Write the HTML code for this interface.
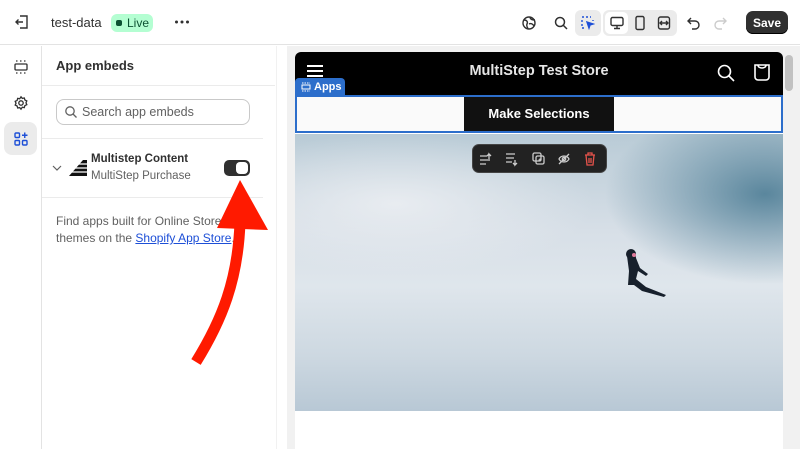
<!DOCTYPE html>
<html><head><style>
*{box-sizing:border-box;margin:0;padding:0}
body{width:800px;height:449px;overflow:hidden;background:#fff;font-family:"Liberation Sans",sans-serif;position:relative;color:#303030}
.a{position:absolute}
</style></head><body>
<!-- top bar -->
<div class="a" style="left:0;top:0;width:800px;height:45px;background:#fff;border-bottom:1px solid #e3e3e3"></div>
<svg class="a" style="left:14px;top:14px" width="16" height="16" viewBox="0 0 16 16" fill="none" stroke="#303030" stroke-width="1.4"><path d="M6 2h7v12H6M9 8H2M4.5 5.5L2 8l2.5 2.5"/></svg>
<div class="a" style="left:51px;top:15px;font-size:13px">test-data</div>
<div class="a" style="left:111px;top:14px;width:42px;height:18px;border-radius:6px;background:#b4fed2;font-size:12px;color:#0c5132;padding:2px 0 0 16px">Live</div>
<div class="a" style="left:116px;top:20px;width:6px;height:6px;border-radius:2px;background:#0c5132"></div>
<svg class="a" style="left:174px;top:20px" width="16" height="4" viewBox="0 0 16 4" fill="#303030"><circle cx="2.5" cy="2" r="1.5"/><circle cx="8" cy="2" r="1.5"/><circle cx="13.5" cy="2" r="1.5"/></svg>
<svg class="a" style="left:521px;top:15px" width="16" height="16" viewBox="0 0 16 16" fill="none" stroke="#303030" stroke-width="1.4"><circle cx="8" cy="8" r="6"/><path d="M3 5c3 0 4 2 3 4s1 4 1 5M9 2c0 2 2 3 5 3M8 9c2-1 4 0 5 2"/></svg>
<svg class="a" style="left:553px;top:15px" width="16" height="16" viewBox="0 0 16 16" fill="none" stroke="#303030" stroke-width="1.5"><circle cx="7" cy="7" r="4.5"/><path d="M10.5 10.5L14 14"/></svg>
<div class="a" style="left:575px;top:10px;width:26px;height:26px;border-radius:6px;background:#ebebeb"></div>
<svg class="a" style="left:581px;top:16px" width="14" height="14" viewBox="0 0 14 14" fill="none" stroke="#1d4fd7" stroke-width="1.4"><path d="M1 1h2M5 1h2M9 1h1M1 4v2M1 8v2M1 12h2M12 4v1" /><path d="M6 6l6 2-3 1-1 3z" fill="#1d4fd7"/></svg>
<div class="a" style="left:603px;top:10px;width:74px;height:26px;border-radius:6px;background:#ebebeb"></div>
<div class="a" style="left:605px;top:12px;width:23px;height:22px;border-radius:5px;background:#fff"></div>
<svg class="a" style="left:609px;top:15px" width="16" height="16" viewBox="0 0 16 16" fill="none" stroke="#303030" stroke-width="1.4"><rect x="2" y="2.5" width="12" height="8" rx="1.5"/><path d="M8 10.5v3M5 13.5h6"/></svg>
<svg class="a" style="left:632px;top:15px" width="16" height="16" viewBox="0 0 16 16" fill="none" stroke="#303030" stroke-width="1.4"><rect x="4" y="1.5" width="8" height="13" rx="1.5"/></svg>
<svg class="a" style="left:656px;top:15px" width="16" height="16" viewBox="0 0 16 16" fill="none" stroke="#303030" stroke-width="1.4"><rect x="2.5" y="2" width="11" height="12" rx="2"/><path d="M4 8h8M6 6l-2 2 2 2M10 6l2 2-2 2"/></svg>
<svg class="a" style="left:686px;top:15px" width="16" height="16" viewBox="0 0 16 16" fill="none" stroke="#303030" stroke-width="1.4"><path d="M5 3L2 6l3 3M2 6h7a4 4 0 010 8H6"/></svg>
<svg class="a" style="left:712px;top:15px" width="16" height="16" viewBox="0 0 16 16" fill="none" stroke="#ccc" stroke-width="1.4"><path d="M11 3l3 3-3 3M14 6H7a4 4 0 000 8h3"/></svg>
<div class="a" style="left:746px;top:11px;width:42px;height:23px;border-radius:7px;background:#303030;color:#fff;font-size:12px;font-weight:bold;text-align:center;line-height:23px;padding:0;box-shadow:inset 0 -1px 0 #000"><span style="display:inline-block;line-height:14px;vertical-align:middle">Save</span></div>

<!-- left rail -->
<div class="a" style="left:0;top:46px;width:42px;height:403px;border-right:1px solid #e3e3e3"></div>
<svg class="a" style="left:13px;top:59px" width="16" height="16" viewBox="0 0 16 16" fill="none" stroke="#303030" stroke-width="1.3"><rect x="2" y="5" width="12" height="6" rx="1"/><path d="M3 2h2M7 2h2M11 2h2M3 14h2M7 14h2M11 14h2" stroke-dasharray="1.5 1"/></svg>
<svg class="a" style="left:13px;top:95px" width="16" height="16" viewBox="0 0 16 16" fill="none" stroke="#303030" stroke-width="1.3"><circle cx="8" cy="8" r="2.2"/><path d="M8 1.8l1.3 1.6 2-.4.6 2 1.9.9-.8 1.9.8 1.9-1.9.9-.6 2-2-.4L8 14.2l-1.3-1.6-2 .4-.6-2-1.9-.9.8-1.9-.8-1.9 1.9-.9.6-2 2 .4z"/></svg>
<div class="a" style="left:4px;top:122px;width:33px;height:33px;border-radius:8px;background:#ebebeb"></div>
<svg class="a" style="left:13px;top:131px" width="16" height="16" viewBox="0 0 16 16" fill="none" stroke="#1d4fd7" stroke-width="1.4"><rect x="2" y="2" width="4.5" height="4.5" rx="1"/><rect x="2" y="9.5" width="4.5" height="4.5" rx="1"/><rect x="9.5" y="9.5" width="4.5" height="4.5" rx="1"/><path d="M11.75 1.5v5.5M9 4.25h5.5"/></svg>

<!-- side panel -->
<div class="a" style="left:56px;top:58px;font-size:13px;font-weight:bold;color:#303030">App embeds</div>
<div class="a" style="left:42px;top:85px;width:233px;height:1px;background:#ebebeb"></div>
<div class="a" style="left:56px;top:99px;width:194px;height:26px;border:1px solid #c9c9c9;border-radius:8px;background:#fff"></div>
<svg class="a" style="left:64px;top:105px" width="14" height="14" viewBox="0 0 14 14" fill="none" stroke="#616161" stroke-width="1.3"><circle cx="6" cy="6" r="4.2"/><path d="M9 9l3.5 3.5"/></svg>
<div class="a" style="left:82px;top:105px;font-size:12.5px;color:#616161">Search app embeds</div>
<div class="a" style="left:42px;top:138px;width:221px;height:1px;background:#ebebeb"></div>
<svg class="a" style="left:52px;top:164px" width="10" height="8" viewBox="0 0 10 8" fill="none" stroke="#616161" stroke-width="1.2"><path d="M1 2l4 4 4-4"/></svg>
<svg class="a" style="left:69px;top:160px" width="18" height="16" viewBox="0 0 18 16"><path d="M14 0L18 0 18 16 0 16z" fill="#111"/><path d="M0 4h18M0 8h18M0 12h18" stroke="#fff" stroke-width="1.3"/></svg>
<div class="a" style="left:91px;top:153px;font-size:11.5px;font-weight:bold;color:#303030">Multistep Content</div>
<div class="a" style="left:91px;top:170px;font-size:11.5px;color:#616161">MultiStep Purchase</div>
<div class="a" style="left:224px;top:160px;width:26px;height:16px;border-radius:5px;background:#303030"></div>
<div class="a" style="left:236px;top:162px;width:12px;height:12px;border-radius:4px;background:#fff"></div>
<div class="a" style="left:42px;top:197px;width:221px;height:1px;background:#ebebeb"></div>
<div class="a" style="left:56px;top:213px;font-size:12px;line-height:17px;color:#616161;width:230px">Find apps built for Online Store 2.0<br>themes on the <span style="color:#1d4fd7;text-decoration:underline">Shopify App Store</span>.</div>
<div class="a" style="left:275px;top:46px;width:12px;height:403px;background:#fff"></div>
<div class="a" style="left:276px;top:46px;width:1px;height:403px;background:#f1f1f1"></div>

<!-- preview -->
<div class="a" style="left:287px;top:46px;width:513px;height:403px;background:#f1f1f1"></div>
<div class="a" style="left:295px;top:52px;width:488px;height:397px;background:#fff;border-radius:6px 6px 0 0;overflow:hidden">
 <div class="a" style="left:0;top:0;width:488px;height:44px;background:#000"></div>
 <div class="a" style="left:12px;top:13px;width:16px;height:2px;background:#fff;box-shadow:0 5px 0 #fff,0 10px 0 #fff"></div>
 <div class="a" style="left:0;top:11px;width:488px;text-align:center;color:#e6e6e6;font-weight:bold;font-size:14.5px">MultiStep Test Store</div>
 <svg class="a" style="left:422px;top:12px" width="18" height="18" viewBox="0 0 18 18" fill="none" stroke="#fff" stroke-width="1.6"><circle cx="7.5" cy="7.5" r="6"/><path d="M12 12l5 5"/></svg>
 <svg class="a" style="left:458px;top:11px" width="18" height="19" viewBox="0 0 18 19" fill="none" stroke="#fff" stroke-width="1.6"><path d="M2 2h14v12a3 3 0 01-3 3H5a3 3 0 01-3-3z"/><path d="M5 2c0 4 8 4 8 0"/></svg>
 <div class="a" style="left:0;top:45px;width:488px;height:36px;background:#fafafa"></div>
 <div class="a" style="left:169px;top:45px;width:150px;height:34px;background:#111;color:#fff;font-weight:bold;font-size:13px;text-align:center;line-height:34px">Make Selections</div>
 <div class="a" style="left:0;top:43px;width:488px;height:38px;border:2px solid #2c6ecb"></div>
 <div class="a" style="left:0;top:26px;width:50px;height:18px;background:#2c6ecb;border-radius:4px 4px 0 0;color:#fff;font-size:11px;font-weight:bold;line-height:18px;padding-left:19px">Apps</div>
 <svg class="a" style="left:6px;top:30px" width="10" height="10" viewBox="0 0 10 10" fill="none" stroke="#fff" stroke-width="1"><rect x="1" y="3" width="8" height="4"/><path d="M1 1h8M1 9h8" stroke-dasharray="1.5 1"/></svg>
 <div class="a" style="left:0;top:82px;width:488px;height:277px;background:
   radial-gradient(ellipse 160px 90px at 470px 60px,rgba(70,120,145,.85),rgba(120,160,180,0)),
   radial-gradient(ellipse 200px 70px at 100px 70px,rgba(235,238,242,.9),rgba(235,238,242,0)),
   linear-gradient(180deg,#b9cbd6 0%,#d7dfe7 35%,#dfe6ec 55%,#cdd8e1 80%,#b8c8d5 100%)"></div>
 <svg class="a" style="left:325px;top:196px" width="70" height="60" viewBox="0 0 70 60">
  <path d="M7 8c4-4 9-3 9 2l4 10 8 6-2 2-8-5-2 8 10 8 20 8-2 2-22-6-8-6-6 0 1-14z" fill="#17202c"/>
  <circle cx="11" cy="6" r="5" fill="#17202c"/><circle cx="14" cy="7" r="2" fill="#e07a9b"/>
 </svg>
</div>
<div class="a" style="left:472px;top:144px;width:135px;height:29px;background:#222;border-radius:7px;border:1px solid #444"></div>
<svg class="a" style="left:478px;top:150px" width="125" height="18" viewBox="0 0 125 18" fill="none" stroke="#ccc" stroke-width="1.3">
<path d="M2 6h7M2 10h8M2 14h6M11 11V4l2 2M11 4l-2 2"/>
<path d="M28 4h9M28 8h8M28 12h6M37 10v5l2-2M37 15l-2-2"/>
<rect x="55" y="3" width="8" height="8" rx="1.5"/><rect x="58" y="6" width="8" height="8" rx="1.5"/><path d="M62 8.5v3M60.5 10h3"/>
<path d="M81 9c2-4 8-4 10 0-2 4-8 4-10 0zM81 14l10-10"/><circle cx="86" cy="9" r="1.7"/>
<path d="M107 5h10M110 5V3h4v2M108 5l1 10h6l1-10M111 8v5M113 8v5" stroke="#e5534b"/>
</svg>
<div class="a" style="left:785px;top:55px;width:8px;height:36px;border-radius:4px;background:#c1c1c1"></div>

<!-- red arrow -->
<svg class="a" style="left:0;top:0" width="800" height="449" viewBox="0 0 800 449">
<path d="M196 362C222 320 238 280 240 222" fill="none" stroke="#ff1a00" stroke-width="11" stroke-linecap="butt"/>
<path d="M240 180L268 230L217 228z" fill="#ff1a00"/>
</svg>
</body></html>
